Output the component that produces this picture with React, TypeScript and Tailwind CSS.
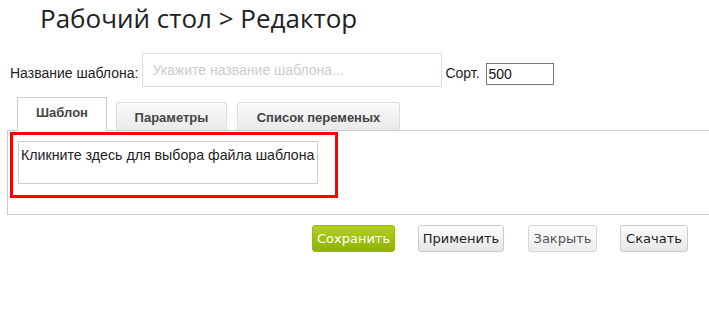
export default function App() {
  return (
    <div className="w-[709px] h-[336px] overflow-hidden bg-white font-['Liberation_Sans',Arial,sans-serif] text-[#222]">
      {/* Заголовок */}
      <h1 className="pl-[40px] pt-[1px] h-[49px] text-[26px] leading-[34px] text-[#222] font-['Open_Sans',sans-serif]">
        Рабочий стол &gt; Редактор
      </h1>

      {/* Название + сортировка */}
      <div className="flex items-end pl-[10px] h-[38px]">
        <span className="text-[14px] leading-none mb-[7px] text-[#222]">Название шаблона:</span>
        <div className="ml-[4px] w-[300px] h-[34px] border border-[#ddd] flex items-center px-[9px] text-[14px] text-[#ccc]">
          Укажите название шаблона...
        </div>
        <span className="ml-[3px] text-[14px] leading-none mb-[7px]">Сорт.</span>
        <div className="ml-[6px] w-[68px] h-[22px] border border-[#777] flex items-center px-[2px] text-[14px] text-[#111] mb-[2px]">
          500
        </div>
      </div>

      {/* Вкладки */}
      <div className="flex items-end pl-[17px] h-[44px] mt-[-1px] relative z-10">
        <div className="w-[90px] h-[34px] border border-[#ccc] border-b-0 bg-white flex items-center justify-center text-[13px] font-bold text-[#444] pb-[4px] mb-[-1px]">
          Шаблон
        </div>
        <div className="ml-[9px] w-[111px] h-[28px] border border-[#ddd] border-b-0 rounded-t-[3px] bg-gradient-to-b from-[#fafafa] to-[#e9e9e9] flex items-center justify-center text-[13px] font-bold text-[#444] pt-[3px]">
          Параметры
        </div>
        <div className="ml-[10px] w-[163px] h-[28px] border border-[#ddd] border-b-0 rounded-t-[3px] bg-gradient-to-b from-[#fafafa] to-[#e9e9e9] flex items-center justify-center text-[13px] font-bold text-[#444] pt-[3px]">
          Список переменых
        </div>
      </div>

      {/* Панель */}
      <div className="ml-[7px] w-[740px] h-[85px] border border-[#ccc] pt-[1px] pl-[2px]">
        <div className="w-[328px] h-[66px] border-[3px] border-[#f00] pt-[6px] pl-[5px]">
          <div className="w-[300px] h-[43px] border border-[#ccc] px-[2px] pt-[4px] text-[14.2px] leading-[18px] text-[#222]">
            Кликните здесь для выбора файла шаблона
          </div>
        </div>
      </div>

      {/* Кнопки */}
      <div className="flex pl-[312px] mt-[10px] text-[13px] font-['DejaVu_Sans',sans-serif]">
        <button className="w-[83px] h-[27px] rounded-[3px] border border-[#98b80c] bg-gradient-to-b from-[#b1d021] to-[#90b303] text-white">
          Сохранить
        </button>
        <button className="ml-[23px] w-[86px] h-[27px] rounded-[3px] border border-[#ccc] bg-gradient-to-b from-[#fdfdfd] to-[#e6e6e6] text-[#222]">
          Применить
        </button>
        <button className="ml-[24px] w-[69px] h-[27px] rounded-[3px] border border-[#d6d6d6] bg-gradient-to-b from-[#fdfdfd] to-[#ececec] text-[#555]">
          Закрыть
        </button>
        <button className="ml-[23px] w-[68px] h-[27px] rounded-[3px] border border-[#ccc] bg-gradient-to-b from-[#fdfdfd] to-[#e6e6e6] text-[#222]">
          Скачать
        </button>
      </div>
    </div>
  );
}
